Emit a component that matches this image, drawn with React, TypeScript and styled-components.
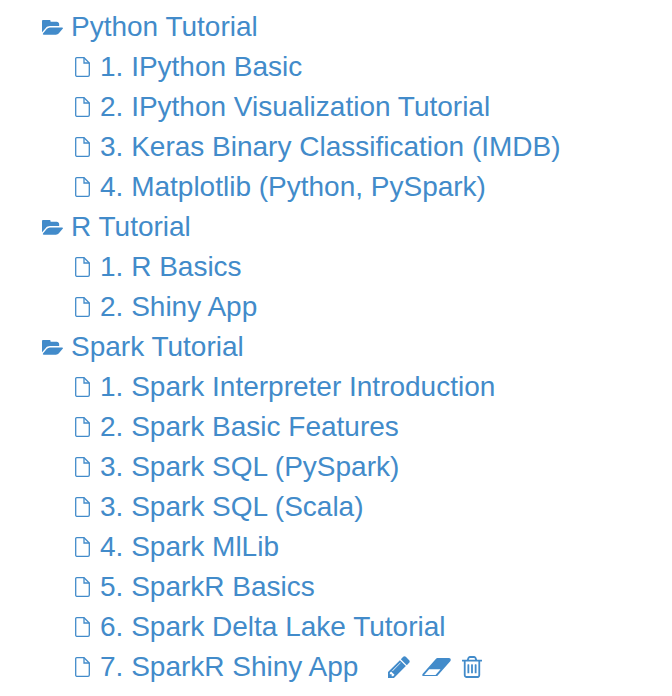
import React from 'react'
import styled, { createGlobalStyle } from 'styled-components'

const blue = '#428bca'

const GlobalStyle = createGlobalStyle`
  html, body {
    margin: 0;
    height: 100%;
    overflow: hidden;
    background: #fff;
  }
`

const Tree = styled.ul`
  list-style: none;
  margin: 0;
  padding: 7px 0 0 42px;
  font-family: "Liberation Sans", Arial, sans-serif;
  font-size: 28px;
  color: ${blue};
`

const Folder = styled.li`
  display: flex;
  align-items: center;
  gap: 8px;
  height: 40px;
`

const FileList = styled.ul`
  list-style: none;
  margin: 0;
  padding: 0 0 0 33px;
`

const FileRow = styled.li`
  display: flex;
  align-items: center;
  gap: 10px;
  height: 40px;
`

const Actions = styled.span`
  display: flex;
  align-items: center;
  gap: 11.5px;
  margin-left: 20px;
`

const FolderIcon = () => (
  <svg width="21" height="15" viewBox="0 256 1879 1280" fill={blue}>
    <path d="M1879 952q0 31-31 66l-336 396q-43 51-120.500 86.500t-143.500 35.500h-1088q-34 0-60.500-13t-26.500-43q0-31 31-66l336-396q43-51 120.500-86.500t143.500-35.500h1088q34 0 60.500 13t26.500 43zm-343-344v160h-832q-94 0-197 47.500t-164 119.500l-337 396-5 6q0-4-.5-12.500t-.5-12.500v-960q0-92 66-158t158-66h320q92 0 158 66t66 158v32h544q92 0 158 66t66 158z" />
  </svg>
)

const FileIcon = () => (
  <svg width="15" height="20" viewBox="0 0 15 20" fill="none" stroke={blue} strokeWidth="1.300">
    <path d="M1.700.7H9l5.300 5.300v12c0 .7-.6 1.300-1.300 1.300H1.700C1.100 19.300.7 18.700.7 18V1.700C.7 1.100 1.100.7 1.700.7Z" />
    <path d="M9 .7V6h5.300" />
  </svg>
)

const PencilIcon = () => (
  <svg width="22" height="22" viewBox="128 128 1536 1536" fill={blue}>
    <path d="M491 1536l91-91-235-235-91 91v107h128v128h107zm523-928q0-22-22-22-10 0-17 7l-542 542q-7 7-7 17 0 22 22 22 10 0 17-7l542-542q7-7 7-17zm-54-192l416 416-832 832h-416v-416zm683 96q0 53-37 90l-166 166-416-416 166-165q36-38 90-38 53 0 91 38l235 234q37 39 37 91z" />
  </svg>
)

const EraserIcon = () => (
  <svg width="29" height="18" viewBox="64 256 1920 1216" fill={blue}>
    <path d="M960 1408l336-384h-768l-336 384h768zm1013-1077q15 34 9.500 71.500t-30.500 65.500l-896 1024q-38 44-96 44h-768q-38 0-69.500-20.500t-47.500-54.500q-15-34-9.500-71.500t30.500-65.500l896-1024q38-44 96-44h768q38 0 70 20.500t47 54.500z" />
  </svg>
)

const TrashIcon = () => (
  <svg width="20" height="22" viewBox="192 128 1408 1536" fill={blue}>
    <path d="M704 736v576q0 14-9 23t-23 9h-64q-14 0-23-9t-9-23v-576q0-14 9-23t23-9h64q14 0 23 9t9 23zm256 0v576q0 14-9 23t-23 9h-64q-14 0-23-9t-9-23v-576q0-14 9-23t23-9h64q14 0 23 9t9 23zm256 0v576q0 14-9 23t-23 9h-64q-14 0-23-9t-9-23v-576q0-14 9-23t23-9h64q14 0 23 9t9 23zm128 724v-948h-896v948q0 22 7 40.500t14.500 27 10.500 8.500h832q3 0 10.500-8.500t14.500-27 7-40.500zm-672-1076h448l-48-117q-7-9-17-11h-317q-10 2-17 11zm928 32v64q0 14-9 23t-23 9h-96v948q0 83-47 143.500t-113 60.500h-832q-66 0-113-58.500t-47-141.500v-952h-96q-14 0-23-9t-9-23v-64q0-14 9-23t23-9h309l70-167q15-37 54-63t79-26h320q40 0 79 26t54 63l70 167h309q14 0 23 9t9 23z" />
  </svg>
)

const sections = [
  {
    name: 'Python Tutorial',
    files: [
      '1. IPython Basic',
      '2. IPython Visualization Tutorial',
      '3. Keras Binary Classification (IMDB)',
      '4. Matplotlib (Python, PySpark)',
    ],
  },
  { name: 'R Tutorial', files: ['1. R Basics', '2. Shiny App'] },
  {
    name: 'Spark Tutorial',
    files: [
      '1. Spark Interpreter Introduction',
      '2. Spark Basic Features',
      '3. Spark SQL (PySpark)',
      '3. Spark SQL (Scala)',
      '4. Spark MlLib',
      '5. SparkR Basics',
      '6. Spark Delta Lake Tutorial',
      '7. SparkR Shiny App',
    ],
  },
  { name: 'Zeppelin Tutorial', files: [] },
]

const App = () => (
  <>
    <GlobalStyle />
    <Tree>
      {sections.map((section) => (
        <React.Fragment key={section.name}>
          <Folder>
            <FolderIcon />
            {section.name}
          </Folder>
          <FileList>
            {section.files.map((file) => (
              <FileRow key={file}>
                <FileIcon />
                {file}
                {file.startsWith('7.') && (
                  <Actions>
                    <PencilIcon />
                    <EraserIcon />
                    <TrashIcon />
                  </Actions>
                )}
              </FileRow>
            ))}
          </FileList>
        </React.Fragment>
      ))}
    </Tree>
  </>
)

export default App
